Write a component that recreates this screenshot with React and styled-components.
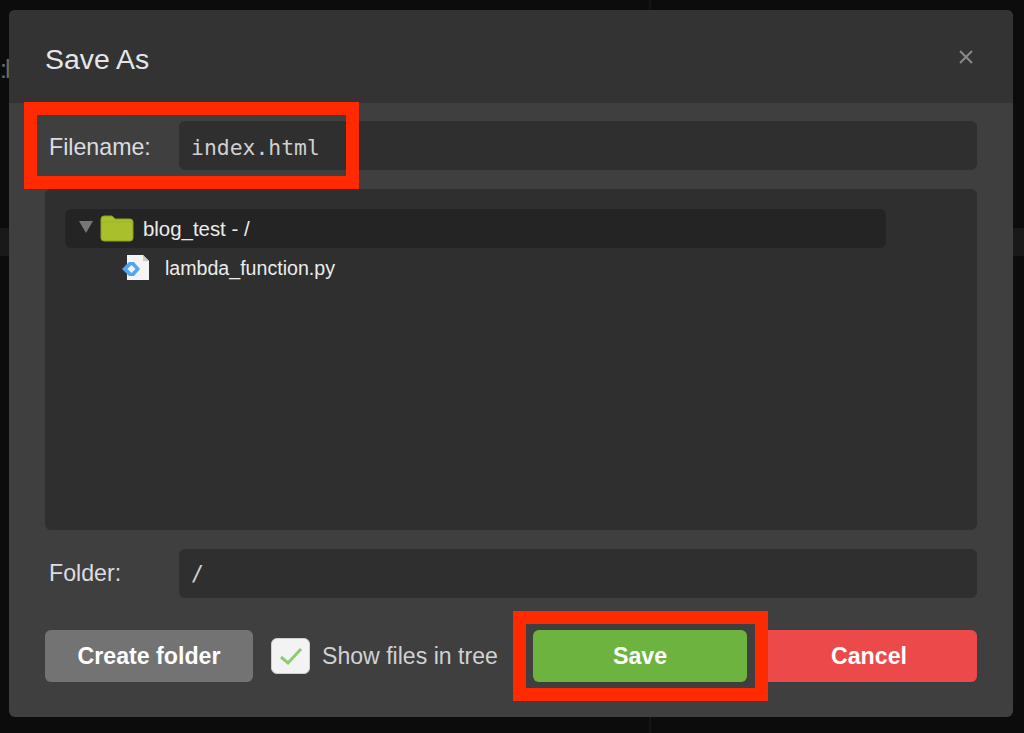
import React from 'react';
import styled, { createGlobalStyle } from 'styled-components';

const GlobalStyle = createGlobalStyle`
  html, body {
    margin: 0;
    padding: 0;
    background: #0c0c0c;
  }
  * {
    box-sizing: border-box;
  }
`;

function App() {
  return (
    <Page>
      <GlobalStyle />
      <EditorBand />
      <EditorSeam />
      <EditorText>:l</EditorText>
      <Dialog>
        <Header>
          <Title>Save As</Title>
          <CloseButton>
            <svg width="16" height="16" viewBox="0 0 16 16">
              <path d="M2 2l12 12M14 2L2 14" stroke="#8a8a8a" strokeWidth="2" fill="none" />
            </svg>
          </CloseButton>
        </Header>
        <Body>
          <FieldRow>
            <FieldLabel $offset={3}>Filename:</FieldLabel>
            <FieldInput $offset={2}>index.html</FieldInput>
          </FieldRow>
          <TreePanel>
            <TreeRoot>
              <Caret />
              <svg width="34" height="28" viewBox="0 0 34 28">
                <path
                  d="M1 4q0-3 3-3h7q2 0 3 2l1 1h15q3 0 3 3v16q0 3-3 3H4q-3 0-3-3z"
                  fill="#a9c02c"
                  stroke="#8b9f22"
                  strokeWidth="1"
                />
                <path d="M2 7h30" stroke="#8b9f22" strokeWidth="0.6" opacity="0.5" />
              </svg>
              <RootName>blog_test - /</RootName>
            </TreeRoot>
            <TreeFile>
              <svg width="28" height="26" viewBox="0 0 28 26">
                <path d="M5 0h16l6 6v19H5z" fill="#f5f5f5" />
                <path d="M21 0l6 6h-6z" fill="#c9c9c9" />
                <path d="M0 14l7-7h5l6 7-6 7H7z" fill="#55a5ee" />
                <path d="M9.5 10l4 4-4 4-4-4z" fill="#eaf4fd" />
              </svg>
              <FileName>lambda_function.py</FileName>
            </TreeFile>
          </TreePanel>
          <FieldRow>
            <FieldLabel>Folder:</FieldLabel>
            <FieldInput>/</FieldInput>
          </FieldRow>
          <Actions>
            <ActionButton $color="#737373" $width="208px">Create folder</ActionButton>
            <CheckLabel>
              <CheckBox>
                <svg width="24" height="20" viewBox="0 0 24 20">
                  <path d="M2 11l7 6L22 3" stroke="#8ccb70" strokeWidth="3" fill="none" />
                </svg>
              </CheckBox>
              Show files in tree
            </CheckLabel>
            <ActionButton $color="#6db33f" $width="214px">Save</ActionButton>
            <ActionButton $color="#ec4a4a" $width="216px">Cancel</ActionButton>
          </Actions>
        </Body>
        <Highlight $left={15} $top={92} $width={335} $height={87} />
        <Highlight $left={504} $top={601} $width={255} $height={90} />
      </Dialog>
    </Page>
  );
}

const Page = styled.div`
  position: relative;
  width: 1024px;
  height: 733px;
  padding: 10px 11px 16px 9px;
  overflow: hidden;
  background: #0c0c0c;
`;

const EditorBand = styled.div`
  position: absolute;
  left: 0;
  right: 0;
  top: 228px;
  height: 28px;
  background: #191919;
`;

const EditorSeam = styled.div`
  position: absolute;
  left: 649px;
  top: 0;
  bottom: 0;
  width: 2px;
  background: #141414;
`;

const EditorText = styled.span`
  position: absolute;
  left: 0;
  top: 55px;
  font: 25px 'Liberation Sans', Arial, sans-serif;
  letter-spacing: -2px;
  color: #6a6a6a;
`;

const Dialog = styled.div`
  position: relative;
  height: 707px;
  border-radius: 6px;
  background: #3f3f3f;
`;

const Header = styled.div`
  display: flex;
  align-items: center;
  justify-content: space-between;
  height: 93px;
  padding: 6px 39px 0 36px;
  border-radius: 6px 6px 0 0;
  background: #333333;
`;

const Title = styled.h1`
  margin: 0;
  font: 400 28.4px 'Liberation Sans', Arial, sans-serif;
  color: #e6e6ea;
`;

const CloseButton = styled.div`
  display: flex;
  margin-top: -6px;
`;

const Body = styled.div`
  display: flex;
  flex-direction: column;
  padding: 18px 36px 0;
`;

const FieldRow = styled.div`
  display: flex;
  align-items: center;
  height: 49px;
`;

const FieldLabel = styled.label`
  flex: 0 0 134px;
  padding: ${p => p.$offset || 0}px 0 0 4px;
  font: 400 23.2px 'Liberation Sans', Arial, sans-serif;
  color: #dcdce0;
`;

const FieldInput = styled.div`
  flex: 1;
  height: 49px;
  padding: ${p => p.$offset || 0}px 12px 0;
  border-radius: 6px;
  background: #2f2f2f;
  line-height: 49px;
  font-family: 'DejaVu Sans Mono', monospace;
  font-size: 21.4px;
  color: #d0d0d0;
`;

const TreePanel = styled.div`
  height: 341px;
  margin: 19px 0;
  padding: 20px;
  border-radius: 6px;
  background: #2f2f2f;
`;

const TreeRoot = styled.div`
  display: flex;
  align-items: center;
  width: 821px;
  height: 39px;
  padding-left: 14px;
  border-radius: 6px;
  background: #242424;
`;

const Caret = styled.span`
  width: 0;
  height: 0;
  margin-right: 7px;
  margin-top: -4px;
  border-left: 7px solid transparent;
  border-right: 7px solid transparent;
  border-top: 12px solid #777777;
`;

const RootName = styled.span`
  margin-left: 9px;
  padding-top: 2px;
  font: 400 20.4px 'Liberation Sans', Arial, sans-serif;
  color: #ececec;
`;

const TreeFile = styled.div`
  display: flex;
  align-items: center;
  height: 40px;
  padding-left: 57px;
`;

const FileName = styled.span`
  margin-left: 15px;
  font: 400 19.6px 'Liberation Sans', Arial, sans-serif;
  color: #ececec;
`;

const Actions = styled.div`
  display: flex;
  align-items: center;
  height: 52px;
  margin-top: 32px;
`;

const ActionButton = styled.button`
  flex: 0 0 ${p => p.$width};
  height: 52px;
  padding: 0;
  border: 0;
  border-radius: 6px;
  background: ${p => p.$color};
  font: 700 23.2px 'Liberation Sans', Arial, sans-serif;
  color: #ffffff;

  & + & {
    margin-left: 14px;
  }
`;

const CheckLabel = styled.label`
  display: flex;
  align-items: center;
  flex: 0 0 280px;
  padding-left: 18px;
  font: 400 23.1px 'Liberation Sans', Arial, sans-serif;
  color: #d0d2d6;
`;

const CheckBox = styled.span`
  display: flex;
  align-items: center;
  justify-content: center;
  width: 39px;
  height: 36px;
  margin-right: 12px;
  border: 1px solid #cfcfcf;
  border-radius: 6px;
  background: #f3f3f3;
`;

const Highlight = styled.div`
  position: absolute;
  left: ${p => p.$left}px;
  top: ${p => p.$top}px;
  width: ${p => p.$width}px;
  height: ${p => p.$height}px;
  border: 13px solid #ff2a00;
  pointer-events: none;
`;

export default App;
